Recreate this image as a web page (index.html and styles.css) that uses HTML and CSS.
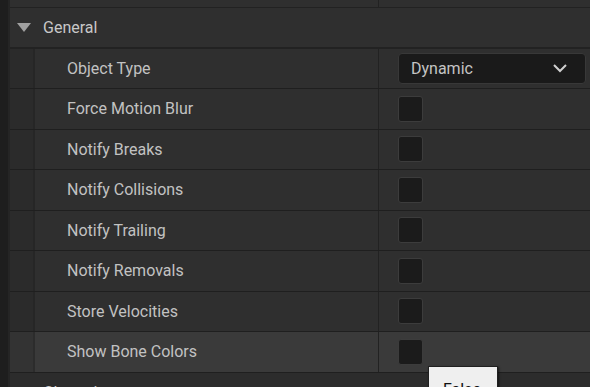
FILE: index.html
```html
<!DOCTYPE html>
<html>
<head>
<meta charset="utf-8">
<link rel="stylesheet" href="styles.css">
</head>
<body>
<div class="panel">
  <div class="row prev"><div class="label-area"></div><div class="value"></div></div>
  <div class="header"><span class="tri"></span><span class="htext">General</span></div>
  <div class="row"><div class="indent"></div><div class="label">Object Type</div>
    <div class="value"><div class="combo"><span>Dynamic</span>
      <svg class="chev" width="16" height="10" viewBox="0 0 16 10"><path d="M2 2 L8 8 L14 2" fill="none" stroke="#d0d0d0" stroke-width="2"/></svg></div></div></div>
  <div class="row"><div class="indent"></div><div class="label">Force Motion Blur</div><div class="value"><div class="check"></div></div></div>
  <div class="row"><div class="indent"></div><div class="label">Notify Breaks</div><div class="value"><div class="check"></div></div></div>
  <div class="row"><div class="indent"></div><div class="label">Notify Collisions</div><div class="value"><div class="check"></div></div></div>
  <div class="row"><div class="indent"></div><div class="label">Notify Trailing</div><div class="value"><div class="check"></div></div></div>
  <div class="row"><div class="indent"></div><div class="label">Notify Removals</div><div class="value"><div class="check"></div></div></div>
  <div class="row"><div class="indent"></div><div class="label">Store Velocities</div><div class="value"><div class="check"></div></div></div>
  <div class="row hover"><div class="indent"></div><div class="label">Show Bone Colors</div><div class="value"><div class="check"></div><div class="tooltip">False</div></div></div>
  <div class="header next"><span class="tri"></span><span class="htext">Clustering</span></div>
</div>
</body>
</html>
```
FILE: styles.css
```css
html, body { margin: 0; padding: 0; }
body {
  width: 590px; height: 387px; overflow: hidden;
  background: #1e1e1e;
  font-family: Roboto, "Noto Sans", sans-serif;
  color: #c2c2c2;
}
.panel {
  margin-left: 8px;
  border-left: 2px solid #252525;
  background: #1f1f1f;
}
.row, .header {
  box-sizing: border-box;
  border-bottom: 1px solid #1f1f1f;
  background: #2f2f2f;
}
.row {
  display: grid;
  grid-template-columns: 25px 344px 1fr;
  height: 40.5px;
}
.row.prev { height: 8px; grid-template-columns: 369px 1fr; border-bottom: 1px solid #222; }
.row.prev .label-area { border-right: 1px solid #222; }
.header {
  height: 40.5px;
  display: flex; align-items: center;
  border-bottom: 2px solid #222;
}
.tri {
  width: 0; height: 0;
  margin-left: 7px;
  border-left: 7.5px solid transparent;
  border-right: 7.5px solid transparent;
  border-top: 9px solid #a0a0a0;
}
.htext { margin-left: 12px; font-size: 16px; color: #c8c8c8; }
.indent {
  background: #2b2b2b;
  border-right: 2px solid #262626;
}
.label {
  display: flex; align-items: center;
  padding-left: 32px;
  font-size: 16px;
  border-right: 1px solid #222;
}
.value { position: relative; display: flex; align-items: center; padding-left: 19px; }
.combo {
  box-sizing: border-box;
  width: 188px; height: 31px;
  background: #1a1a1a;
  border: 1px solid #383838;
  border-radius: 4px;
  display: flex; align-items: center; justify-content: space-between;
  padding: 0 17px 0 12px;
  font-size: 16px; color: #c4c4c4;
}
.check {
  box-sizing: border-box;
  width: 25px; height: 26px;
  background: #1b1b1b;
  border: 1px solid #3c3c3c;
  border-radius: 3px;
}
.row.hover { background: #3a3a3a; }
.row.hover .indent { background: #333333; border-right-color: #2c2c2c; }
.tooltip {
  position: absolute;
  left: 49px; top: 34px;
  width: 70px; height: 40px;
  box-sizing: border-box;
  background: #efefef;
  border: 1px solid #202020;
  box-shadow: 1px 1px 2px rgba(0,0,0,0.6);
  color: #111;
  font-size: 16px;
  padding: 13px 0 0 14px;
  z-index: 2;
}
.header.next { border-bottom: none; background: #2c2c2c; }
```
